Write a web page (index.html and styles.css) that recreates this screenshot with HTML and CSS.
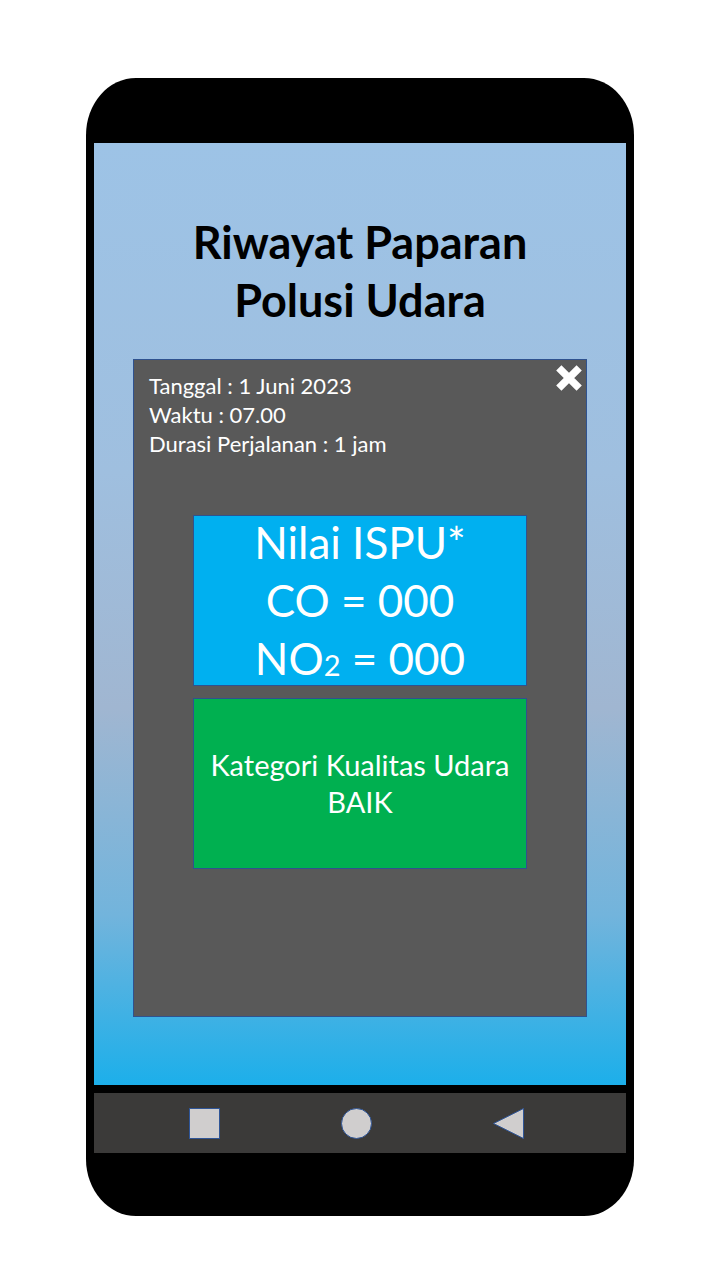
FILE: index.html
```html
<html>
<head>
    <link rel="stylesheet" href="styles.css">
</head>
<body>
    <div class="phone">
        <div class="screen">
            <h1 class="title">Riwayat Paparan<br>Polusi Udara</h1>

            <div class="history-card">
                <button class="close-btn" aria-label="Tutup">
                    <svg width="26" height="26" viewBox="0 0 26 26">
                        <path d="M2.8 2.8 L23.2 23.2 M23.2 2.8 L2.8 23.2" stroke="#fff" stroke-width="7.4" fill="none"/>
                    </svg>
                </button>

                <div class="trip-info">
                    <div>Tanggal : 1 Juni 2023</div>
                    <div>Waktu : 07.00</div>
                    <div>Durasi Perjalanan : 1 jam</div>
                </div>

                <div class="ispu-box">
                    <div>Nilai ISPU*</div>
                    <div>CO = 000</div>
                    <div>NO<span class="sub">2</span> = 000</div>
                </div>

                <div class="category-box">
                    <div>Kategori Kualitas Udara</div>
                    <div>BAIK</div>
                </div>
            </div>
        </div>

        <div class="nav-bar">
            <svg class="nav-icon" width="31" height="31" viewBox="0 0 31 31">
                <rect x="0.5" y="0.5" width="30" height="30" fill="#d0cece" stroke="#2f5597" stroke-width="1"/>
            </svg>
            <svg class="nav-icon" width="31" height="31" viewBox="0 0 31 31">
                <circle cx="15.5" cy="15.5" r="15" fill="#d0cece" stroke="#2f5597" stroke-width="1"/>
            </svg>
            <svg class="nav-icon" width="31" height="31" viewBox="0 0 31 31">
                <polygon points="30.5,0.5 30.5,30.5 0.5,15.5" fill="#d0cece" stroke="#2f5597" stroke-width="1"/>
            </svg>
        </div>
    </div>
</body>
</html>
```

FILE: styles.css
```css
body {
    margin: 0;
    background: #fff;
    font-family: Lato, "Open Sans", sans-serif;
}

.phone {
    width: 548px;
    height: 1138px;
    margin: 78px auto 0;
    padding: 65px 8px 63px;
    box-sizing: border-box;
    background: #000;
    border-radius: 50px / 57px;
    display: flex;
    flex-direction: column;
    gap: 8px;
}

.screen {
    height: 942px;
    background: linear-gradient(to bottom, #9dc3e6 0%, #9fbfdf 35%, #a0b6d1 60%, #72b4dc 82%, #1cafea 100%);
    display: flex;
    flex-direction: column;
    align-items: center;
}

.title {
    margin: 70px 0 0;
    font-size: 45px;
    line-height: 58px;
    font-weight: bold;
    text-align: center;
    color: #000;
}

.history-card {
    position: relative;
    width: 454px;
    height: 658px;
    margin-top: 30px;
    box-sizing: border-box;
    padding: 11px 0 0 15px;
    background: #595959;
    border: 1px solid #2f528f;
    display: flex;
    flex-direction: column;
}

.close-btn {
    position: absolute;
    top: 5px;
    right: 4px;
    width: 26px;
    height: 26px;
    padding: 0;
    border: none;
    background: none;
    cursor: pointer;
}

.close-btn svg {
    display: block;
}

.trip-info {
    color: #fff;
    font-size: 22px;
    line-height: 29px;
}

.ispu-box,
.category-box {
    width: 334px;
    height: 171px;
    box-sizing: border-box;
    margin-left: 44px;
    color: #fff;
    text-align: center;
    display: flex;
    flex-direction: column;
    justify-content: center;
}

.ispu-box {
    margin-top: 57px;
    padding-top: 5px;
    background: #00b0f0;
    border: 1px solid #2f528f;
    font-size: 44px;
    line-height: 58px;
}

.ispu-box .sub {
    font-size: 0.66em;
    vertical-align: -1px;
}

.category-box {
    margin-top: 12px;
    padding-bottom: 2px;
    background: #00b050;
    border: 1px solid #2f528f;
    font-size: 29px;
    line-height: 37px;
}

.nav-bar {
    height: 60px;
    background: #3b3a39;
    display: flex;
    align-items: center;
    gap: 121px;
    padding-left: 95px;
}

.nav-icon {
    display: block;
}
```
